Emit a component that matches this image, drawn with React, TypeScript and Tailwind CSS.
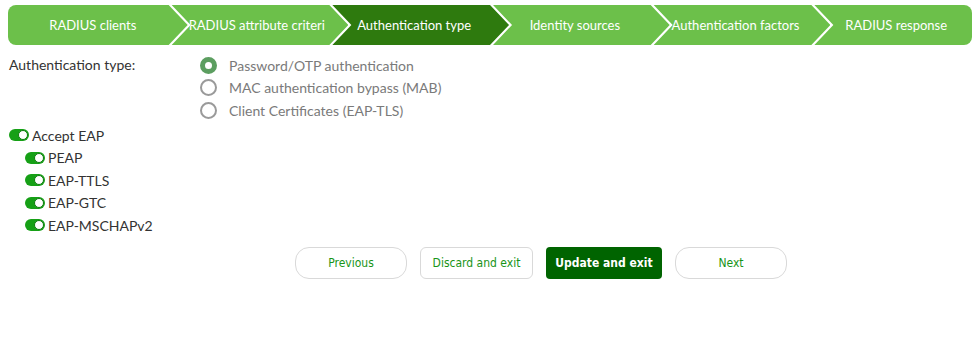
import React from "react";

const steps = [
  "RADIUS clients",
  "RADIUS attribute criteri",
  "Authentication type",
  "Identity sources",
  "Authentication factors",
  "RADIUS response",
];

function Toggle() {
  return (
    <span className="inline-flex items-center w-[20px] h-[12px] rounded-full bg-[#16a016] pr-[1px] justify-end">
      <span className="w-[10px] h-[10px] rounded-full bg-white border-[1.5px] border-[#0f7a0f]" />
    </span>
  );
}

export default function App() {
  const font = { fontFamily: "Lato, 'Liberation Sans', sans-serif" };
  return (
    <div className="w-[975px] h-[346px] bg-white px-[8px] pt-[5px]" style={font}>
      <div className="flex h-[40px] w-[964px] rounded-lg overflow-hidden">
        {steps.map((s, i) => {
          const first = i === 0;
          const last = i === steps.length - 1;
          const active = i === 2;
          const bg = active ? "bg-[#2e7a0e]" : "bg-[#6cc04a]";
          let shape = "";
          if (first)
            shape =
              "w-[calc(100%+19px)] pr-[30px] pl-[20px] [clip-path:polygon(0_0,calc(100%_-_19px)_0,100%_50%,calc(100%_-_19px)_100%,0_100%)]";
          else if (last)
            shape =
              "w-full pr-[11px] pl-[20px] [clip-path:polygon(3px_0,100%_0,100%_100%,3px_100%,22px_50%)]";
          else
            shape =
              "w-[calc(100%+19px)] pr-[30px] pl-[20px] [clip-path:polygon(3px_0,calc(100%_-_19px)_0,100%_50%,calc(100%_-_19px)_100%,3px_100%,22px_50%)]";
          return (
            <div key={s} className="flex-1 min-w-0">
              <div
                className={`h-[40px] ${bg} ${shape} text-center leading-[40px] whitespace-nowrap text-white text-[13px]`}
              >
                {s}
              </div>
            </div>
          );
        })}
      </div>

      <div className="flex mt-[9px]">
        <div className="w-[192px] pl-[1px] text-[14px] text-[#333] leading-[22px]">
          Authentication type:
        </div>
        <div className="flex flex-col">
          {[
            "Password/OTP authentication",
            "MAC authentication bypass (MAB)",
            "Client Certificates (EAP-TLS)",
          ].map((t, i) => (
            <div key={t} className="flex items-center h-[22.5px] text-[14px] text-[#7a7a7a]">
              {i === 0 ? (
                <span className="w-[17px] h-[17px] rounded-full border-[5px] border-[#5c9e60] bg-white" />
              ) : (
                <span className="w-[17px] h-[17px] rounded-full border-[2.5px] border-[#9a9a9a] bg-white" />
              )}
              <span className="ml-[12px]">{t}</span>
            </div>
          ))}
        </div>
      </div>

      <div className="mt-[2.5px] flex flex-col text-[14px] text-[#333]">
        <div className="flex items-center h-[22.5px] pl-[1px]">
          <Toggle />
          <span className="ml-[3px]">Accept EAP</span>
        </div>
        {["PEAP", "EAP-TTLS", "EAP-GTC", "EAP-MSCHAPv2"].map((t) => (
          <div key={t} className="flex items-center h-[22.5px] pl-[17px]">
            <Toggle />
            <span className="ml-[3px]">{t}</span>
          </div>
        ))}
      </div>

      <div
        className="flex gap-[13px] ml-[287px] mt-[10px] text-[12px]"
        style={{ fontFamily: "'DejaVu Sans Condensed', 'DejaVu Sans', sans-serif" }}
      >
        <button className="w-[112px] h-[32px] rounded-[14px] border border-[#d9d9d9] bg-white text-[#189418]">
          Previous
        </button>
        <button className="w-[113px] h-[32px] rounded-[6px] border border-[#d9d9d9] bg-white text-[#189418]">
          Discard and exit
        </button>
        <button className="w-[116px] h-[32px] rounded-[4px] bg-[#006400] text-white font-bold">
          Update and exit
        </button>
        <button className="w-[112px] h-[32px] rounded-[14px] border border-[#d9d9d9] bg-white text-[#189418]">
          Next
        </button>
      </div>
    </div>
  );
}
